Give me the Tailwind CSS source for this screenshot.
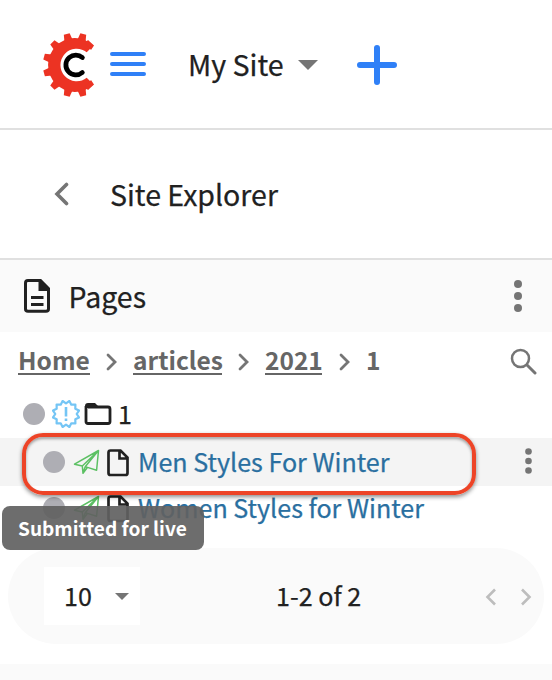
<!DOCTYPE html>
<html lang="en">
<head>
<meta charset="utf-8">
<title>Site Explorer</title>
<script src="https://cdn.jsdelivr.net/npm/@tailwindcss/browser@4"></script>
</head>
<body class="relative w-[552px] h-[680px] overflow-hidden bg-white text-[#212121] font-['Noto_Sans_CJK_SC','Source_Sans_Pro',sans-serif] [-webkit-text-stroke:0.25px]">
<svg class="hidden">
  <symbol id="plane" viewBox="0 0 28 26"><path d="M1.500 15.200 25.500 1.500 23.600 21.200 14.500 18.400 10 24.300 9.300 17ZM9.300 17 25.500 1.500 12.200 17.800M10 24.300 12.200 17.800 14.500 18.400" fill="none" stroke="#5cc063" stroke-width="1.500" stroke-linejoin="round"/></symbol>
  <symbol id="file" viewBox="0 0 22 28"><path d="M3.500 1.500H13.500L20.500 8.500V24Q20.500 26 18.500 26H3.500Q1.500 26 1.500 24V3.500Q1.500 1.500 3.500 1.500ZM12.500 2V9.500H20" fill="none" stroke="#212121" stroke-width="2.700"/></symbol>
</svg>

<header class="flex h-[130px] items-center border-b-2 border-[#e0e0e0] pt-[2px]">
  <svg class="ml-[42px] h-16 w-[54px]" viewBox="-33 -32 54 64">
    <g fill="#ec3323">
      <path d="M18.500 -19.500A26.900 26.900 0 1 0 18.500 19.500L11.700 12.700A16.200 16.200 0 1 1 11.700 -12.700Z"/>
      <path id="tooth" d="M-4.200 -25 -3 -32H3L4.200 -25Z" transform="rotate(15)"/>
      <use href="#tooth" transform="rotate(-30)"/>
      <use href="#tooth" transform="rotate(-60)"/>
      <use href="#tooth" transform="rotate(-90)"/>
      <use href="#tooth" transform="rotate(-120)"/>
      <use href="#tooth" transform="rotate(-150)"/>
      <use href="#tooth" transform="rotate(-180)"/>
      <use href="#tooth" transform="rotate(-210)"/>
      <path d="M10 -22 13 -25 19 -19.500 16 -15ZM10 22 13 25 19 19.500 16 15Z"/>
    </g>
    <circle cx="0.800" cy="0" r="9.900" fill="none" stroke="#000" stroke-width="4.800" stroke-linecap="round" pathLength="360" stroke-dasharray="262 98" transform="rotate(49 0.800 0)"/>
  </svg>
  <svg class="-mt-[2px] ml-[14px] h-6 w-9" viewBox="0 0 36 24" stroke="#2f80f7" stroke-width="4" stroke-linecap="round"><path d="M2 2H34M2 12H34M2 22H34"/></svg>
  <span class="-mt-[2px] ml-[42px] w-[97px] whitespace-nowrap text-[28.6px] leading-10">My Site</span>
  <svg class="ml-[13px] h-[10px] w-5" viewBox="0 0 20 10"><path d="M0 0H20L10 10Z" fill="#757575"/></svg>
  <svg class="ml-[38px] size-[42px]" viewBox="0 0 42 42" stroke="#2f80f7" stroke-width="6" stroke-linecap="round"><path d="M21 4V38M4 21H38"/></svg>
</header>

<section class="flex h-[130px] items-center border-b-2 border-[#e0e0e0]">
  <svg class="ml-[54px] h-6 w-4" viewBox="0 0 16 24" fill="none" stroke="#757575" stroke-width="3.600" stroke-linecap="round"><path d="M12.500 2.500 3 12 12.500 21.500"/></svg>
  <h1 class="ml-10 whitespace-nowrap text-[28.5px] leading-10">Site Explorer</h1>
</section>

<section class="flex h-[72px] items-center bg-[#fafafa]">
  <svg class="ml-6 h-[34px] w-[26px]" viewBox="0 0 26 34"><path d="M4 1.500H16.500L24.500 9.500V30Q24.500 32.300 22 32.300H4Q1.500 32.300 1.500 30V4Q1.500 1.500 4 1.500Z" fill="none" stroke="#212121" stroke-width="3"/><path d="M14.500 2H17L25 10V12H14.500ZM7 17H19.500V20H7ZM7 24H19.500V27H7Z" fill="#212121"/></svg>
  <h2 class="ml-[18.5px] whitespace-nowrap text-[28.5px] leading-10">Pages</h2>
  <svg class="mr-[29px] ml-auto h-8 w-[10px]" viewBox="0 0 10 32" fill="#757575"><circle cx="5" cy="4" r="4"/><circle cx="5" cy="16" r="4"/><circle cx="5" cy="28" r="4"/></svg>
</section>

<nav class="flex h-[58px] items-center text-[24.5px] leading-[34px] font-bold text-[#666] [-webkit-text-stroke:0px]">
  <span class="ml-[18px] flex h-[28px] w-[72px] items-center border-b-2 border-[#666] whitespace-nowrap">Home</span>
  <svg class="mt-[2px] ml-4 h-[18px] w-[11px]" viewBox="0 0 11 18" fill="none" stroke="#757575" stroke-width="2.800" stroke-linecap="round"><path d="M2 2 9 9 2 16"/></svg>
  <span class="ml-4 flex h-[28px] w-[89px] items-center border-b-2 border-[#666] whitespace-nowrap">articles</span>
  <svg class="mt-[2px] ml-4 h-[18px] w-[11px]" viewBox="0 0 11 18" fill="none" stroke="#757575" stroke-width="2.800" stroke-linecap="round"><path d="M2 2 9 9 2 16"/></svg>
  <span class="ml-4 flex h-[28px] w-[57px] items-center border-b-2 border-[#666] whitespace-nowrap">2021</span>
  <svg class="mt-[2px] ml-[17px] h-[18px] w-[11px]" viewBox="0 0 11 18" fill="none" stroke="#757575" stroke-width="2.800" stroke-linecap="round"><path d="M2 2 9 9 2 16"/></svg>
  <span class="ml-4 flex h-[28px] items-center border-b-2 border-transparent">1</span>
  <svg class="mr-[15px] ml-auto size-[27px]" viewBox="0 0 27 27" fill="none" stroke="#757575"><circle cx="10.500" cy="10.500" r="8.500" stroke-width="2.500"/><path d="M17 17 25 25" stroke-width="3" stroke-linecap="round"/></svg>
</nav>

<main class="text-[25.1px] leading-[36px]">
  <div class="flex h-12 items-center">
    <i class="ml-[23px] size-[22px] rounded-full bg-[#aeaeb4]"></i>
    <svg class="ml-[7px] size-7" viewBox="-14 -14 28 28" fill="none" stroke="#74c5f5" stroke-width="2.200"><path stroke-linejoin="round" d="M0 -10.700 3.400 -13 5.300 -9.300 9.400 -9.400 9.300 -5.300 13 -3.400 10.700 0 13 3.400 9.300 5.300 9.400 9.400 5.300 9.300 3.400 13 0 10.700 -3.400 13 -5.300 9.300 -9.400 9.400 -9.300 5.300 -13 3.400 -10.700 0 -13 -3.400 -9.300 -5.300 -9.400 -9.400 -5.300 -9.300 -3.400 -13Z"/><path stroke-width="2.600" d="M0 -7V2.500M0 4.500V7"/></svg>
    <svg class="ml-1 h-[22px] w-7" viewBox="0 0 28 22"><path d="M4 4H24Q26 4 26 6V18.500Q26 20.500 24 20.500H4Q2 20.500 2 18.500V3" fill="none" stroke="#212121" stroke-width="2.800"/><path d="M1 5V3Q1 0 4 0H11L14 3V5Z" fill="#212121"/></svg>
    <span class="-mt-[2px] ml-[6px]">1</span>
  </div>
  <div class="flex h-12 items-center bg-[#f4f4f4]">
    <i class="ml-[43px] size-[22px] rounded-full bg-[#aeaeb4]"></i>
    <svg class="ml-2 h-[26px] w-7"><use href="#plane"/></svg>
    <svg class="mt-[2px] ml-[6px] h-7 w-[22px]"><use href="#file"/></svg>
    <a class="-mt-[2px] ml-[9px] whitespace-nowrap text-[#2a6fa0]">Men Styles For Winter</a>
    <svg class="-mt-[2px] mr-5 ml-auto h-[26px] w-[7px]" viewBox="0 0 7 26" fill="#757575"><circle cx="3.500" cy="3.500" r="3.300"/><circle cx="3.500" cy="13" r="3.300"/><circle cx="3.500" cy="22.500" r="3.300"/></svg>
  </div>
  <div class="flex h-[44px] items-center">
    <i class="ml-[43px] size-[22px] rounded-full bg-[#aeaeb4]"></i>
    <svg class="ml-2 h-[26px] w-7"><use href="#plane"/></svg>
    <svg class="mt-[2px] ml-[6px] h-7 w-[22px]"><use href="#file"/></svg>
    <a class="-mt-[2px] ml-[9px] whitespace-nowrap text-[#2a6fa0]">Women Styles for Winter</a>
  </div>
</main>

<footer class="mx-2 mt-[18px] flex h-24 items-center rounded-full bg-[#fafafa] text-[25.1px] leading-[36px]">
  <div class="ml-9 flex h-[58px] w-24 items-center bg-white">
    <span class="-mt-[2px] ml-5 w-[29px]">10</span>
    <svg class="ml-[22px] h-[7px] w-[14px]" viewBox="0 0 14 7"><path d="M0 0H14L7 7Z" fill="#757575"/></svg>
  </div>
  <span class="-mt-[2px] ml-[136px] whitespace-nowrap">1-2 of 2</span>
  <div class="mt-[1px] mr-[12px] ml-auto flex gap-[25px]">
    <svg class="h-[18px] w-[11px]" viewBox="0 0 11 18" fill="none" stroke="#bdbdbd" stroke-width="2.600"><path d="M10 1.500 2.500 9 10 16.500"/></svg>
    <svg class="h-[18px] w-[11px]" viewBox="0 0 11 18" fill="none" stroke="#bdbdbd" stroke-width="2.600"><path d="M1 1.500 8.500 9 1 16.500"/></svg>
  </div>
</footer>
<div class="mt-5 h-4 bg-[#fafafa]"></div>

<div class="absolute top-[433px] left-[22px] h-[62px] w-[454px] rounded-[21px] border-4 border-[#ed4427] shadow-[0_2px_4px_rgba(0,0,0,0.45),inset_0_2px_3px_rgba(0,0,0,0.35)]"></div>
<div class="absolute top-[506px] left-[2px] flex h-11 w-[202px] items-center rounded-[8px] bg-[#616161]/92 pl-4 text-[19.1px] leading-8 font-bold whitespace-nowrap text-white [-webkit-text-stroke:0px]">Submitted for live</div>
</body>
</html>
